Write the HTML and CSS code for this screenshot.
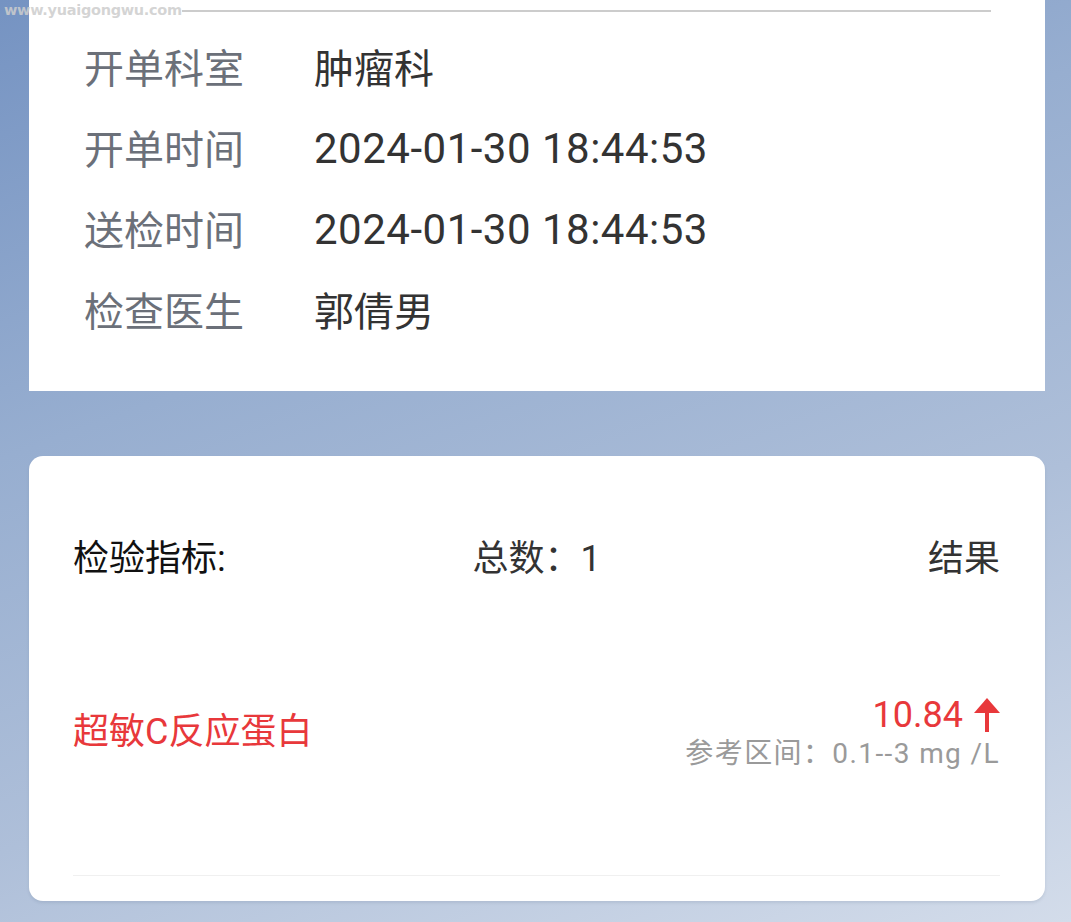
FILE: index.html
```html
<!DOCTYPE html>
<html lang="zh-CN">
<head>
    <meta charset="UTF-8">
    <meta name="viewport" content="width=device-width, initial-scale=1.0">
    <title>检验报告</title>
    <link rel="stylesheet" href="styles.css">
</head>
<body>
    <div class="watermark">
        <span class="watermark-text">www.yuaigongwu.com</span>
        <span class="watermark-line"></span>
    </div>

    <div class="card info">
        <div class="info-row">
            <span class="info-label">开单科室</span>
            <span class="info-value">肿瘤科</span>
        </div>
        <div class="info-row">
            <span class="info-label">开单时间</span>
            <span class="info-value date">2024-01-30 18:44:53</span>
        </div>
        <div class="info-row">
            <span class="info-label">送检时间</span>
            <span class="info-value date">2024-01-30 18:44:53</span>
        </div>
        <div class="info-row">
            <span class="info-label">检查医生</span>
            <span class="info-value">郭倩男</span>
        </div>
    </div>

    <div class="card result">
        <div class="result-head">
            <span class="head-title">检验指标:</span>
            <span class="head-total">总数：1</span>
            <span class="head-result">结果</span>
        </div>
        <div class="result-item">
            <span class="item-name">超敏C反应蛋白</span>
            <div class="item-value">
                <div class="value-line">
                    <span>10.84</span>
                    <svg class="arrow-up" width="26" height="34" viewBox="0 0 26 34">
                        <polygon points="13,0 26,15 0,15" fill="#e8383b"/>
                        <rect x="11" y="12" width="4" height="22" fill="#e8383b"/>
                    </svg>
                </div>
                <div class="ref-line">参考区间：0.1--3 mg /L</div>
            </div>
        </div>
        <div class="divider"></div>
    </div>
</body>
</html>
```

FILE: styles.css
```css
body {
    margin: 0;
    padding: 0;
    min-height: 922px;
    font-family: Roboto, "Noto Sans CJK SC", sans-serif;
    background: linear-gradient(160deg, #7593c2 0%, #97aed0 35%, #aebfd9 65%, #d3dcea 100%);
    overflow: hidden;
}
.watermark {
    position: absolute;
    top: 2px;
    left: 0;
    width: 991px;
    display: flex;
    align-items: center;
}
.watermark-text {
    font-family: "DejaVu Sans", sans-serif;
    font-size: 14.5px;
    font-weight: bold;
    color: rgba(205, 205, 205, 0.85);
    padding-left: 4px;
    letter-spacing: -0.3px;
}
.watermark-line {
    flex: 1;
    height: 2px;
    background: #cccccc;
    margin-top: 1px;
}
.card {
    background: #fff;
    width: 1016px;
    margin-left: 29px;
    box-sizing: border-box;
}
.info {
    padding: 25px 0 42px 55px;
}
.info-row {
    display: flex;
    align-items: center;
    height: 81px;
    font-size: 40px;
}
.info-label {
    width: 230px;
    color: #6b7079;
}
.info-value {
    color: #333;
}
.info-value.date {
    font-size: 42px;
    letter-spacing: 0.5px;
    padding-top: 4px;
}
.result {
    margin-top: 65px;
    border-radius: 14px;
    padding: 69px 45px 25px 44px;
    box-shadow: 0 2px 3px rgba(80, 100, 130, 0.15);
}
.result-head {
    display: grid;
    grid-template-columns: 1fr auto 1fr;
    align-items: center;
    height: 60px;
    font-size: 36px;
}
.head-title {
    color: #111;
}
.head-total {
    color: #333;
}
.head-result {
    justify-self: end;
    color: #333;
}
.result-item {
    display: flex;
    justify-content: space-between;
    align-items: center;
    height: 290px;
}
.item-name {
    font-size: 36px;
    color: #e8383b;
    padding-bottom: 4px;
}
.item-value {
    text-align: right;
    padding-top: 8px;
}
.value-line {
    display: flex;
    justify-content: flex-end;
    align-items: center;
    gap: 11px;
    height: 40px;
    line-height: 40px;
    font-size: 36px;
    color: #e8383b;
}
.arrow-up {
    display: block;
}
.ref-line {
    font-size: 28px;
    line-height: 38px;
    letter-spacing: 1.4px;
    color: #9a9a9a;
}
.divider {
    height: 1px;
    background: #f0f0f0;
}
```
